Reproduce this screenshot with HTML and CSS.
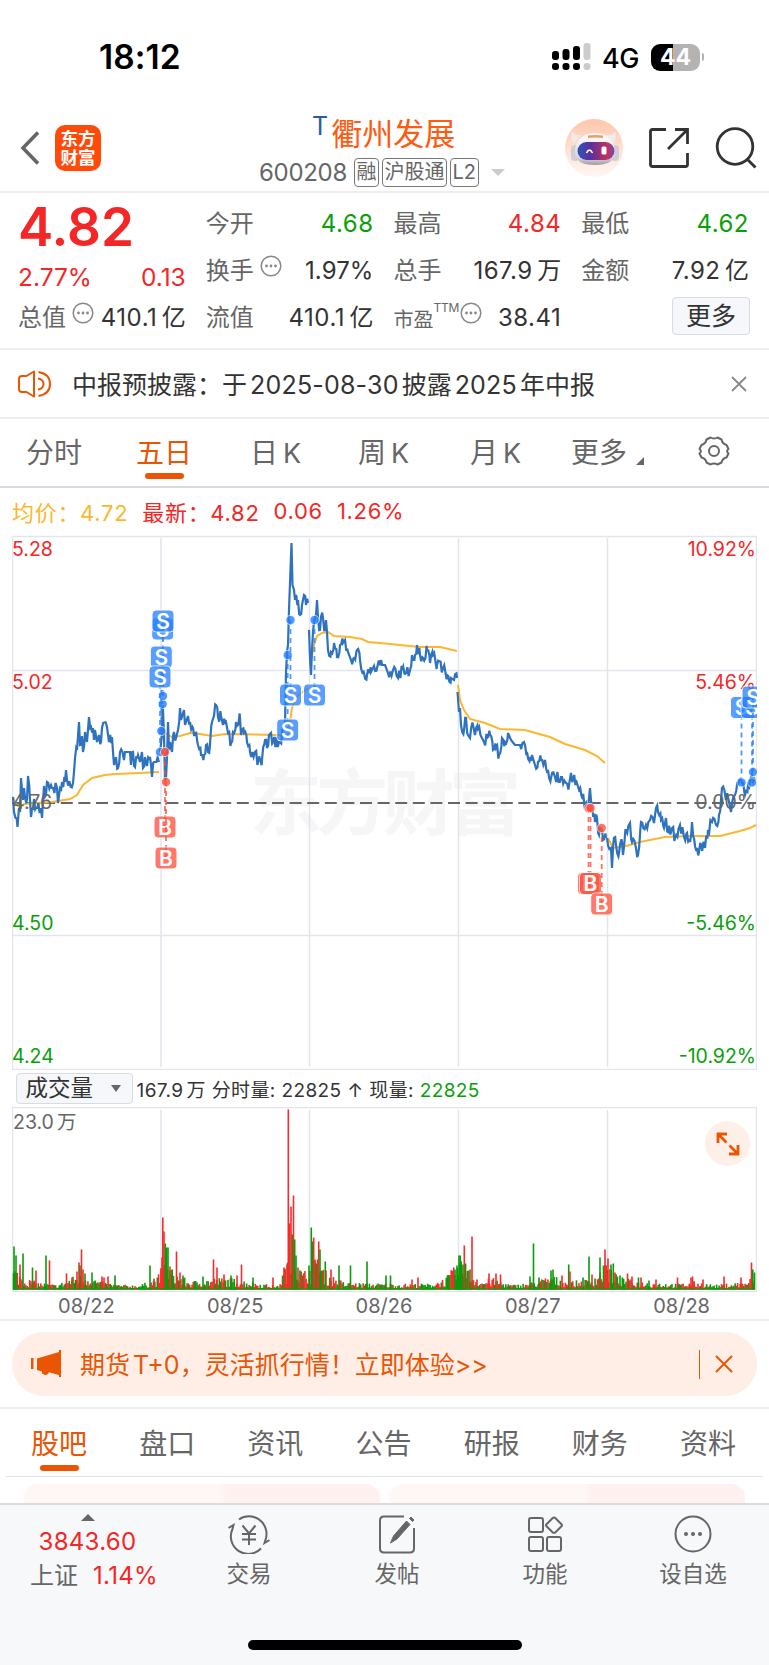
FILE: index.html
```html
<!DOCTYPE html>
<html lang="zh-CN">
<head>
    <meta charset="UTF-8">
    <meta name="viewport" content="width=device-width, initial-scale=1.0">
    <title>衢州发展 600208</title>
    <link rel="stylesheet" href="styles.css">
</head>
<body>
    <div class="status-bar">
        <span class="clock">18:12</span>
        <svg class="signal" width="39" height="28" viewBox="0 0 39 28">
            <g fill="#000">
                <rect x="0" y="8" width="7" height="9" rx="3"/><rect x="0" y="20" width="7" height="7" rx="3"/>
                <rect x="10.5" y="6" width="7" height="11" rx="3"/><rect x="10.5" y="20" width="7" height="7" rx="3"/>
                <rect x="21" y="3" width="7" height="14" rx="3"/><rect x="21" y="20" width="7" height="7" rx="3"/>
            </g>
            <g fill="#ccc"><rect x="31.5" y="0" width="7" height="17" rx="3"/><rect x="31.5" y="20" width="7" height="7" rx="3"/></g>
        </svg>
        <span class="network">4G</span>
        <span class="battery">44</span>
        <span class="battery-tip"></span>
    </div>

    <header class="header">
        <div class="header-left">
            <svg width="21" height="34" viewBox="0 0 21 34"><path d="M18 1.500 3 17l15 15.500" fill="none" stroke="#666" stroke-width="3.600"/></svg>
            <div class="logo">东方<br>财富</div>
        </div>
        <div class="header-title">
            <h1><sup>T</sup>衢州发展</h1>
            <div class="code">
                <span class="code-num">600208</span>
                <span class="tag">融</span><span class="tag">沪股通</span><span class="tag">L2</span>
                <span class="caret"></span>
            </div>
        </div>
        <div class="header-right">
            <svg width="60" height="60" viewBox="0 0 60 60">
                <defs>
                    <linearGradient id="halo" x1="0" y1="0" x2="0" y2="1"><stop offset="0" stop-color="#ffc6aa"/><stop offset="1" stop-color="#fff8f4"/></linearGradient>
                    <linearGradient id="visor"><stop offset="0" stop-color="#2f55b5"/><stop offset=".35" stop-color="#5a2f9e"/><stop offset=".8" stop-color="#c0325c"/><stop offset="1" stop-color="#7a4ab8"/></linearGradient>
                    <linearGradient id="shell" x1="0" y1="0" x2="0" y2="1"><stop offset=".2" stop-color="#f8f6f6"/><stop offset=".8" stop-color="#d5d3d8"/><stop offset="1" stop-color="#9c9aa2"/></linearGradient>
                </defs>
                <circle cx="30" cy="30" r="29" fill="url(#halo)"/>
                <path d="M8.500 13q-3 6 1 12l8-8q-8 1-9-4M50.500 13q3 6-1 12l-8-8q8 1 9-4" fill="#efebec"/>
                <rect x="7" y="27" width="8" height="16" rx="4" fill="#cfced6"/>
                <rect x="47" y="27" width="8" height="16" rx="4" fill="#cfced6"/>
                <path d="M31 15C18 15 11 23 11 34c0 9 7 13 20 13s20-4 20-13c0-11-7-19-20-19" fill="url(#shell)"/>
                <rect x="13.500" y="24" width="37" height="18" rx="9" fill="url(#visor)"/>
                <path d="M24 17.500q7.500-1 15 0v2.500q-7.500-1-15 0z" fill="#e8a062"/>
                <path d="M22.500 35q3-6 6 0" fill="none" stroke="#fff" stroke-width="1.600"/>
                <rect x="37.500" y="28.500" width="5" height="8" rx="1.500" fill="#fff"/>
            </svg>
            <svg width="42" height="42" viewBox="0 0 42 42" fill="none" stroke="#333" stroke-width="2.800">
                <path d="M18 2.500H4.500q-2 0-2 2v33q0 2 2 2h33q2 0 2-2V26M27 2.500h12.500V17M39 3 20 22"/>
            </svg>
            <svg width="42" height="42" viewBox="0 0 42 42" fill="none" stroke="#333" stroke-width="2.800">
                <circle cx="20" cy="19.500" r="17.800"/><path d="m32 32 8.500 8.500"/>
            </svg>
        </div>
    </header>

    <section class="quote">
        <div class="quote-col first">
            <div class="price">4.82</div>
            <div class="cell change"><span>2.77%</span><span>0.13</span></div>
            <div class="cell"><label>总值</label><svg class="dots"><use href="#dots"/></svg><span class="value">410.1<i>亿</i></span></div>
        </div>
        <div class="quote-col">
            <div class="cell"><label>今开</label><span class="value green">4.68</span></div>
            <div class="cell"><label>换手</label><svg class="dots"><use href="#dots"/></svg><span class="value percent">1.97%</span></div>
            <div class="cell"><label>流值</label><span class="value">410.1<i>亿</i></span></div>
        </div>
        <div class="quote-col">
            <div class="cell"><label>最高</label><span class="value red">4.84</span></div>
            <div class="cell"><label>总手</label><span class="value">167.9<i>万</i></span></div>
            <div class="cell"><label class="small">市盈</label><span class="ttm">TTM</span><svg class="dots tight"><use href="#dots"/></svg><span class="value">38.41</span></div>
        </div>
        <div class="quote-col">
            <div class="cell"><label>最低</label><span class="value green">4.62</span></div>
            <div class="cell"><label>金额</label><span class="value">7.92<i>亿</i></span></div>
            <div class="cell"><button class="more">更多</button></div>
        </div>
    </section>

    <div class="notice">
        <svg width="34" height="28" viewBox="0 0 34 28" fill="none" stroke="#ea5504" stroke-width="2" stroke-linejoin="round">
            <path d="M16 1.500v25L8.500 22H4q-3 0-3-3V9q0-3 3-3h4.500zM20 8.500q5.500 1 5.500 5.500T20 19.500M20.500 2q11.500 2 11.500 12t-11.500 12"/>
        </svg>
        <span class="notice-text">中报预披露：于<i>2025-08-30</i>披露<i>2025</i>年中报</span>
        <svg class="close" width="16" height="16" viewBox="0 0 16 16"><path d="m1 1 14 14M15 1 1 15" stroke="#888" stroke-width="1.800"/></svg>
    </div>

    <nav class="period-tabs">
        <span>分时</span>
        <span><b class="active">五日</b></span>
        <span>日<i>K</i></span>
        <span>周<i>K</i></span>
        <span>月<i>K</i></span>
        <span class="tab-more">更多</span>
        <svg width="32" height="32" viewBox="0 0 32 32" fill="none" stroke="#666" stroke-width="2">
            <path d="M12.500 2.500q3.500 2 7 0l4 2q.8 4.200 5 5.500l2 4q-2.800 2-0 4.500l-2 4q-4.200 1-5 5l-4 2q-3.500-2-7 0l-4-2q-.8-4-5-5l-2-4q2.800-2.500 0-4.500l2-4q4.200-1.300 5-5.500z" stroke-linejoin="round"/>
            <circle cx="16" cy="16" r="5"/>
        </svg>
    </nav>

    <div class="legend">
        <span class="avg">均价：4.72</span><span>最新：4.82</span><span>0.06</span><span>1.26%</span>
    </div>

    <svg class="price-chart" viewBox="12 535 745 535">
        <text class="watermark" x="250" y="829" textLength="271">东方财富</text>
        <g class="grid">
            <path d="M12.500 536.500h744v533h-744z" stroke="#d9dde3"/>
            <path d="M13 670.500h743M13 935.500h743M161 538v529M309.500 538v529M458.500 538v529M607.500 538v529"/>
        </g>
        <g class="axis">
            <text class="up" x="12" y="556">5.28</text>
            <text class="up" x="12" y="689">5.02</text>
            <text class="down" x="12" y="930">4.50</text>
            <text class="down" x="12" y="1063">4.24</text>
            <g text-anchor="end">
                <text class="up" x="756" y="556">10.92%</text>
                <text class="up" x="756" y="689">5.46%</text>
                <text class="down" x="756" y="930">-5.46%</text>
                <text class="down" x="756" y="1063">-10.92%</text>
            </g>
        </g>
        <path d="M12 803h744" stroke="#666" stroke-width="2" stroke-dasharray="12 5.600" stroke-dashoffset="4"/>
        <g id="averageLines" class="average-line"></g>
        <g id="priceLines" class="price-line"></g>
        <g class="axis">
            <text class="flat" x="12" y="809">4.76</text>
            <text class="flat" x="756" y="809" text-anchor="end">0.00%</text>
        </g>
        <g id="trades"></g>
    </svg>

    <div class="volume-head">
        <button class="indicator">成交量<span></span></button>
        <span class="volume-text">167.9<i>万</i> 分时量: 22825 ↑ 现量: <em>22825</em></span>
    </div>

    <div class="volume">
        <svg class="volume-chart" viewBox="12 1107 745 186">
            <g class="grid">
                <path d="M12.500 1107.500h744v184h-744z" stroke="#d9dde3"/>
                <path d="M161 1110v180M309.500 1110v180M458.500 1110v180M607.500 1110v180"/>
            </g>
            <g id="volumeBars"></g>
            <g class="axis"><text class="flat" x="13" y="1129">23.0</text><text class="flat" x="57" y="1129">万</text></g>
        </svg>
        <div class="expand">
            <svg width="24" height="24" viewBox="0 0 24 24" fill="none" stroke="#ea5504" stroke-width="2.800"><path d="M11 2H2v9M2 2l8.500 8.500M13 22h9v-9M22 22l-8.500-8.500"/></svg>
        </div>
    </div>
    <div class="dates"><span>08/22</span><span>08/25</span><span>08/26</span><span>08/27</span><span>08/28</span></div>

    <div class="banner-wrap">
        <div class="banner">
            <svg width="31" height="28" viewBox="0 0 31 28" fill="#ea5504"><path d="M0 8h2.500v11H0zM6 8.500 28 2V0h2v27h-2v-2l-10-2.800q-1 3.500-4 2.800l-3-1.500v-2L6 20z"/></svg>
            <span class="banner-text">期货<i>T+0</i>，灵活抓行情！立即体验&gt;&gt;</span>
            <span class="banner-line"></span>
            <svg width="18" height="18" viewBox="0 0 18 18"><path d="m1 1 16 16M17 1 1 17" stroke="#ea5504" stroke-width="2"/></svg>
        </div>
    </div>

    <nav class="section-tabs">
        <span class="active">股吧</span><span>盘口</span><span>资讯</span><span>公告</span><span>研报</span><span>财务</span><span>资料</span>
    </nav>
    <div class="cards"><div class="card"></div><div class="card"></div></div>

    <footer class="bottom-bar">
        <div class="index">
            <span class="triangle"></span>
            <div>3843.60</div>
            <div class="index-change"><label>上证</label>1.14%</div>
        </div>
        <div class="action">
            <svg width="44" height="40" viewBox="0 0 44 40" fill="none" stroke="#666" stroke-width="2">
                <path d="M12 5.500A17.500 17.500 0 0 1 39 24l-1.500 5 5-3M34 34.500A17.500 17.500 0 0 1 5.500 15L6.500 11l-5 3M15.500 11.500l6.500 8 6.500-8M22 19.500V31M15 20h14M15 25.500h14"/>
            </svg>
            <span>交易</span>
        </div>
        <div class="action">
            <svg width="38" height="40" viewBox="0 0 38 40" fill="none" stroke="#666" stroke-width="2">
                <path d="M26 2.500H6q-4 0-4 4v28q0 4 4 4h26q4 0 4-4V14"/>
                <path d="m28.500 7 3.500 3.500-13 14.500-6.500 4 3-7zM31.500 4.500 33 3l3 3-1.500 1.500z" fill="#666" stroke-width="1"/>
            </svg>
            <span>发帖</span>
        </div>
        <div class="action">
            <svg width="36" height="40" viewBox="0 0 36 40" fill="none" stroke="#666" stroke-width="2">
                <rect x="2" y="4" width="14" height="14" rx="2"/><rect x="2" y="23" width="14" height="14" rx="2"/><rect x="20" y="23" width="14" height="14" rx="2"/>
                <path d="m25.500 4.300-6 6q-1 1 0 2l6 6q1.500 1 3 0l6-6q1-1 0-2l-6-6q-1.500-1.500-3 0z"/>
            </svg>
            <span>功能</span>
        </div>
        <div class="action">
            <svg width="40" height="40" viewBox="0 0 40 40"><circle cx="20" cy="20" r="17.500" fill="none" stroke="#666" stroke-width="2"/><g fill="#666"><circle cx="13" cy="20" r="2"/><circle cx="20" cy="20" r="2"/><circle cx="27" cy="20" r="2"/></g></svg>
            <span>设自选</span>
        </div>
    </footer>
    <div class="home-area"><span></span></div>

    <svg width="0" height="0" class="symbols">
        <symbol id="dots" viewBox="0 0 22 22"><circle cx="11" cy="11" r="9.800" fill="none" stroke="#888" stroke-width="1.500"/><g fill="#888"><circle cx="6.500" cy="11" r="1.400"/><circle cx="11" cy="11" r="1.400"/><circle cx="15.500" cy="11" r="1.400"/></g></symbol>
    </svg>
    <script src="script.js"></script>
</body>
</html>
```
FILE: styles.css
```css
* {
    box-sizing: border-box;
}
body {
    margin: 0;
    width: 769px;
    height: 1665px;
    overflow: hidden;
    background: #fff;
    color: #333;
    font-family: Inter, "Noto Sans CJK SC", sans-serif;
    font-size: 24px;
    display: flex;
    flex-direction: column;
}
svg {
    display: block;
    flex: none;
}
i, em {
    font-style: normal;
}
h1 {
    margin: 0;
    font-weight: 400;
}
button {
    font-family: inherit;
    color: #333;
    background: #f6f7fa;
    border: 1.5px solid #d8dbe2;
    border-radius: 4px;
    padding: 0;
}
.symbols {
    position: absolute;
}
.red {
    color: #f42626;
}
.green {
    color: #0aa00a;
}

/* status bar */
.status-bar {
    height: 112px;
    padding: 2px 65px 0 99px;
    display: flex;
    align-items: center;
    color: #000;
}
.clock {
    font-size: 33.5px;
    font-weight: 600;
    letter-spacing: 0.1px;
    margin-right: auto;
}
.network {
    font-size: 27px;
    font-weight: 500;
    letter-spacing: -0.5px;
    margin: 2px 12px 0 11px;
}
.battery {
    width: 49px;
    height: 27px;
    border-radius: 9px;
    background: linear-gradient(90deg, #000 44%, #b3b3b3 44%);
    color: #fff;
    font-size: 23px;
    font-weight: 700;
    line-height: 27px;
    text-align: center;
}
.battery-tip {
    width: 2px;
    height: 8px;
    margin-left: 2px;
    border-radius: 0 3px 3px 0;
    background: #b3b3b3;
}

/* header */
.header {
    height: 81px;
    border-bottom: 2px solid #eee;
    display: flex;
}
.header-left {
    display: flex;
    align-items: center;
    padding: 0 0 7px 20px;
    gap: 14px;
}
.logo {
    width: 46px;
    height: 46px;
    border-radius: 10px;
    background: #ff4a0a;
    color: #fff;
    font-size: 17.5px;
    font-weight: 700;
    line-height: 19px;
    padding-top: 4px;
    text-align: center;
}
.header-title {
    flex: none;
    width: 250px;
    margin-left: 158px;
}
.header-title h1 {
    height: 43px;
    padding-left: 53px;
    color: #ff5a0f;
    font-size: 31px;
    line-height: 44px;
    display: flex;
    white-space: nowrap;
}
.header-title sup {
    color: #2c5aa5;
    font-size: 25px;
    line-height: 28px;
    margin-right: 3px;
}
.code {
    display: flex;
    align-items: center;
    height: 34px;
    color: #666;
    white-space: nowrap;
}
.code-num {
    font-size: 24px;
    letter-spacing: -0.3px;
    margin-right: 7px;
}
.tag {
    height: 29px;
    border: 1.5px solid #777;
    border-radius: 4px;
    padding: 0 1.5px;
    margin-right: 3px;
    font-size: 20px;
    line-height: 26px;
}
.caret {
    margin-left: 9px;
    border: 7px solid transparent;
    border-top-color: #ccc;
    border-bottom: 0;
}
.header-right {
    display: flex;
    align-items: center;
    margin-left: auto;
    padding: 0 12px 7px 0;
    gap: 25px;
}
.header-right svg:first-child {
    margin-right: -1px;
}

/* quote */
.quote {
    height: 157px;
    padding: 7px 20px 0 18px;
    border-bottom: 2px solid #eee;
    display: grid;
    grid-template-columns: repeat(4, 1fr);
    gap: 20px;
}
.cell {
    height: 47px;
    display: flex;
    align-items: center;
    line-height: 30px;
}
.cell label {
    color: #666;
    font-size: 24px;
}
.cell label.small {
    font-size: 20px;
    margin-top: 5px;
}
.value {
    margin-left: auto;
    letter-spacing: 0.5px;
    white-space: nowrap;
}
.value.percent {
    letter-spacing: 0.1px;
}
.value i {
    margin-left: 4.5px;
    letter-spacing: 0;
}
.price {
    height: 56px;
    color: #f42626;
    font-size: 53px;
    font-weight: 600;
    line-height: 54px;
}
.change {
    height: 38px;
    padding-top: 4px;
    color: #f42626;
    font-size: 24.5px;
    justify-content: space-between;
}
.dots {
    width: 22px;
    height: 22px;
    margin: 0 0 10px 6px;
}
.dots.tight {
    margin-left: 1px;
}
.ttm {
    font-size: 12px;
    letter-spacing: -0.3px;
    color: #666;
    margin-bottom: 20px;
}
.more {
    width: 78px;
    height: 38px;
    margin: 0 -1px 4px auto;
    font-size: 25px;
    line-height: 34px;
}

/* notice */
.notice {
    height: 69px;
    padding: 0 22px 0 18px;
    border-bottom: 2px solid #eee;
    display: flex;
    align-items: center;
}
.notice-text {
    margin: 0 0 2px 20px;
    font-size: 25px;
    white-space: nowrap;
}
.notice-text i {
    margin: 0 3px;
    letter-spacing: 0.2px;
}
.close {
    margin-left: auto;
}

/* period tabs */
.period-tabs {
    height: 69px;
    padding: 0 0 3px 26px;
    border-bottom: 2px solid #d8dae2;
    display: grid;
    grid-template-columns: 110px 114px 108px 112px 101px 127px auto;
    align-items: center;
    color: #666;
    font-size: 28px;
}
.period-tabs i {
    font-size: 27px;
    margin-left: 5px;
}
.active {
    color: #ea5504;
    font-weight: 400;
    position: relative;
}
.active::after {
    content: "";
    position: absolute;
    left: 50%;
    bottom: -9px;
    width: 39px;
    height: 6px;
    margin-left: -19.5px;
    border-radius: 3px;
    background: #ea5504;
}
.tab-more {
    position: relative;
}
.tab-more::after {
    content: "";
    position: absolute;
    left: 65px;
    bottom: 6px;
    border-left: 8px solid transparent;
    border-bottom: 8px solid #666;
}

/* price chart */
.legend {
    height: 47px;
    padding: 0 0 1px 12px;
    display: flex;
    align-items: center;
    gap: 14px;
    color: #f42626;
    font-size: 22px;
    letter-spacing: 0.7px;
    white-space: nowrap;
}
.legend .avg {
    color: #fcb72c;
}
.price-chart {
    width: 745px;
    height: 535px;
    margin-left: 12px;
}
.grid path {
    fill: none;
    stroke: #e3e5ee;
    stroke-width: 1.5;
}
.axis text {
    font-size: 19.5px;
}
.axis .up {
    fill: #f42626;
}
.axis .down {
    fill: #0aa00a;
}
.axis .flat {
    fill: #666;
}
.watermark {
    font-size: 72px;
    font-weight: 700;
    fill: #f6f6f6;
}
.price-line polyline {
    fill: none;
    stroke: #2f72be;
    stroke-width: 2.2;
}
.average-line polyline {
    fill: none;
    stroke: #fdb62f;
    stroke-width: 2;
}
.trade text {
    fill: #fff;
    font-size: 21px;
    font-weight: 600;
    text-anchor: middle;
}

/* volume */
.volume-head {
    height: 37px;
    padding: 0 15.5px 1px;
    display: flex;
    align-items: center;
}
.indicator {
    width: 117px;
    height: 31px;
    padding-left: 9px;
    font-size: 22.5px;
    line-height: 26px;
    display: flex;
    align-items: center;
    gap: 18px;
}
.indicator span {
    border: 5px solid transparent;
    border-top: 7px solid #666;
    border-bottom: 0;
}
.volume-text {
    margin-left: 4px;
    font-size: 19px;
    letter-spacing: 0.4px;
    white-space: nowrap;
}
.volume-text i {
    margin-left: 3px;
}
.volume-text em {
    color: #0aa00a;
}
.volume {
    position: relative;
    margin-left: 12px;
}
.volume-chart {
    width: 745px;
    height: 186px;
}
.expand {
    position: absolute;
    right: 19px;
    top: 14px;
    width: 45px;
    height: 45px;
    border-radius: 50%;
    background: #fef0e9;
    display: flex;
    align-items: center;
    justify-content: center;
}
.dates {
    height: 28px;
    padding: 0 13px 0 12px;
    border-bottom: 2px solid #eee;
    display: flex;
    color: #666;
    font-size: 20px;
    line-height: 27px;
    text-align: center;
}
.dates span {
    flex: 1;
}

/* banner */
.banner-wrap {
    height: 88px;
    padding: 11px 12px;
    border-bottom: 2px solid #eee;
}
.banner {
    height: 64px;
    padding: 0 24px 0 19px;
    border-radius: 32px;
    background: #feeee6;
    color: #ea5504;
    display: flex;
    align-items: center;
}
.banner-text {
    margin: 0 auto 2px 18px;
    font-size: 25px;
    white-space: nowrap;
}
.banner-text i {
    margin-left: 3px;
}
.banner-line {
    width: 1.5px;
    height: 29px;
    margin-right: 15px;
    background: #ea5504;
}

/* section tabs */
.section-tabs {
    height: 68px;
    margin: 0 6px;
    padding: 0 27px 1px 25px;
    border-bottom: 1.5px solid #dfe0e8;
    display: flex;
    align-items: center;
    justify-content: space-between;
    color: #666;
    font-size: 28px;
}
.cards {
    height: 26px;
    padding: 7px 24px 0;
    display: flex;
    gap: 9px;
}
.card {
    flex: 1;
    border-radius: 14px 14px 0 0;
    background: linear-gradient(90deg, #fff7f5 55%, #fff1ef 57%);
}

/* bottom bar */
.bottom-bar {
    height: 101px;
    border-top: 2px solid #d9dbe0;
    background: #f6f8fa;
    display: flex;
    color: #666;
    font-size: 22.5px;
}
.index {
    width: 175px;
    padding-top: 9px;
    display: flex;
    flex-direction: column;
    align-items: center;
    color: #f42626;
    font-size: 24px;
    letter-spacing: 0.3px;
    line-height: 34px;
}
.index label {
    color: #666;
    letter-spacing: 0;
    margin-right: 15px;
}
.index-change {
    padding-left: 13px;
}
.triangle {
    border: 7px solid transparent;
    border-bottom: 7px solid #666;
    border-top: 0;
    margin-bottom: 4px;
}
.action {
    width: 148px;
    padding-top: 9px;
    display: flex;
    flex-direction: column;
    align-items: center;
    line-height: 39px;
}
.home-area {
    flex: 1;
    background: #f6f8fa;
    padding-top: 36px;
}
.home-area span {
    display: block;
    width: 274px;
    height: 10px;
    margin: 0 auto;
    border-radius: 5px;
    background: #000;
}
```
FILE: script.js
```js
const NS = 'http://www.w3.org/2000/svg';

// price and average lines, one string of "x,y" points per day
const prices = [
    '13,797 14,812 15.5,818 17.5,827 19,808 20,812 21,778 22,790 23,800 24,788 25,797 27,799 28,776 30,800 31,817 33,810 34,799 36,808 41,808 42,818 43,802 44,786 46,795 47,782 51,785 52,788 57,788 58,803 60,788 62,782 65,782 66,770 67,780 73,783 74,772 75,758 77,750 79,722 80,745 82,736 83,752 85,732 87,742 89,717 91,727 93,728 94,740 95,730 97,742 99,735 101,742 102,728 107,727 109,742 112,737 113,752 114,765 116,757 118,768 120,752 124,760 125,752 130,752 131,765 133,752 135,767 138,755 140,762 142,752 143,768 145,757 147,766 150,757 151,765 152,777 154,762 159,762',
    '160,752 162,735 162.5,705 163,710 164,735 165,780 166,778 167,757 168,722 169,750 170,742 172,752 174,732 176,738 178,730 180,708 181,720 184,710 185,725 188,716 190,722 193,728 195,733 198,745 201,755 204,755 206,745 208,752 210,745 212,722 214,716 216,705 218,717 221,716 223,725 226,722 228,733 231,743 233,732 236,722 240,718 241,735 244,733 247,742 250,752 255,752 258,762 262,760 265,740 267,748 269,735 271,733 273,742 280,742 284,730 285,725 286,672 288,645 289,610 291.5,543 292.5,585 294,590 295,600 298,600 300,615 302,605 304,595 306,605 308,603',
    '309,630 311,675 312,650 313,632 315,620 317,600 318,618 320,630 321,617 323,618 325,630 326,620 327,632 328,650 331,652 334,643 337,657 340,645 343,643 345,640 348,652 351,660 354,658 357,650 360,660 364,673 367,675 371,672 374,666 382,665 385,665 388,673 393,670 398,678 402,670 405,674 410,670 412,655 415,655 417,645 420,655 423,658 427,650 430,663 433,655 437,665 443,668 447,675 451,678 454,680 457,678',
    '457.5,692 459,712 460,708 461,725 464,730 466,718 468,735 470,738 473,725 475,735 478,729 481,736 484,742 487,738 490,735 493,750 496,748 499,755 502,738 505,742 508,733 511,740 515,745 520,745 524,742 527,752 530,757 532,755 535,765 538,762 541,760 545,760 548,770 551,778 555,777 562,777 566,783 569,785 571,773 573,780 576,780 579,790 582,797 586,803 588,808 590,788 592,805 595,822 597,818 599,835 601,830 603,840 606,838',
    '607,838 611,848 612,868 614,838 616,845 619,853 622,842 623,855 626,830 630,823 632,842 636,848 638,855 641,822 646,825 650,820 654,823 656,808 658,812 661,820 664,828 666,818 668,832 672,828 675,838 680,825 684,837 687,833 690,842 692,822 694,838 697,848 699,852 701,845 705,848 708,830 712,822 716,825 719,815 721,800 722,788 726,800 728,797 731,812 735,795 738,785 742,783 745,795 748,785 752,775 755,780'
];
const averages = [
    '13,797 15,803 20,808 24,804 52,802 70,799 77,795 83,785 92,778 105,775 115,774 140,773 159,772',
    '161,740 163,725 165,733 172,737 180,736 190,733 200,734 212,736 225,734 276,735 288,735 290,722 292,708 296,697 304,691 308,688',
    '311,660 314,645 317,636 322,633 328,632 334,636 350,637 362,639 368,642 380,643 400,645 420,647 440,647 457,651',
    '458,685 460,700 464,710 470,719 485,723 500,729 525,730 550,737 565,744 585,750 597,756 605,763',
    '608,838 613,848 626,846 640,842 665,837 690,836 720,836 740,831 750,828 756,825'
];

// [type, x, y of the dot, y of the label]
const trades = [
    ['S', 162.7, 704, 629], ['S', 163, 696, 621], ['S', 161.3, 731, 657], ['S', 160, 752, 677],
    ['B', 165, 752, 827], ['B', 166, 782, 858],
    ['S', 287.7, 655, 730], ['S', 290.5, 620, 695], ['S', 314.5, 620, 695],
    ['B', 588.5, 808, 883.5], ['B', 590.5, 808, 883.5], ['B', 601.7, 828, 904],
    ['S', 741.5, 782.5, 707.5], ['S', 752, 782.5, 707.5], ['S', 753, 772, 697]
];

// [x, height, colour] of the bars that stand out
const spikes = [
    [14, 43, 'g'], [16, 34, 'g'], [20, 25, 'r'], [23, 36, 'g'], [32.5, 22, 'g'], [36, 19, 'r'], [46, 34, 'g'], [49.5, 29, 'r'],
    [66.5, 16, 'r'], [72, 12, 'r'], [77, 18, 'r'], [79, 27, 'r'], [80, 24, 'g'], [81.5, 40, 'r'], [83, 20, 'r'], [85, 16, 'g'], [92, 17, 'g'], [102, 13, 'r'], [104, 12, 'r'], [108, 13, 'r'],
    [115, 14, 'g'], [150, 24, 'g'], [154, 11, 'r'], [161, 20, 'r'], [162, 32, 'r'], [162.8, 72, 'r'], [164, 58, 'r'], [165.3, 46, 'g'], [166.6, 42, 'g'], [168, 42, 'g'], [170, 23, 'r'], [172, 20, 'g'], [176.5, 38, 'r'],
    [180, 17, 'r'], [183, 14, 'g'], [203, 13, 'g'], [213.5, 30, 'r'], [217, 22, 'r'], [224, 15, 'r'], [231, 14, 'g'], [237, 14, 'r'],
    [241.5, 25, 'r'], [253, 12, 'g'], [273, 12, 'r'], [284, 22, 'r'], [285, 20, 'r'], [287, 25, 'r'], [288.3, 180, 'r'], [289.7, 66, 'r'], [291, 83, 'r'], [292.2, 55, 'g'],
    [293.5, 94, 'r'], [294.7, 50, 'g'], [296, 34, 'g'], [298, 22, 'r'], [301, 16, 'r'], [309, 24, 'g'], [311.3, 62, 'g'], [312.5, 48, 'g'], [313.7, 52, 'r'], [315, 30, 'r'], [316.3, 26, 'g'], [317.5, 30, 'r'], [318.7, 48, 'r'], [320, 40, 'g'], [321.5, 19, 'g'],
    [325.3, 28, 'g'], [331, 20, 'r'], [339, 24, 'g'], [350.5, 24, 'g'], [367, 28, 'g'], [386, 14, 'g'], [390.5, 14, 'g'],
    [412, 10, 'r'], [418, 12, 'r'], [449, 14, 'g'], [455, 20, 'g'], [457, 24, 'g'], [459, 34, 'g'], [460.2, 34, 'g'], [461.5, 24, 'g'], [463, 25, 'g'], [464.3, 44, 'r'], [465.6, 26, 'g'], [470, 20, 'g'], [472, 53, 'r'],
    [477, 10, 'r'], [489, 16, 'r'], [496, 16, 'r'], [500.5, 15, 'r'], [530, 13, 'g'], [533.5, 46, 'g'], [539, 12, 'g'],
    [551, 19, 'g'], [553, 20, 'g'], [562, 14, 'r'], [568.7, 25, 'g'], [570, 18, 'r'], [583, 12, 'g'], [589, 33, 'g'], [592, 15, 'r'], [600, 32, 'g'],
    [603.5, 24, 'g'], [605, 40, 'r'], [606.2, 24, 'r'], [608, 31, 'r'], [611, 25, 'g'], [613.3, 26, 'g'], [615, 17, 'r'], [620, 14, 'g'], [627.5, 16, 'r'],
    [632, 13, 'r'], [638.5, 12, 'g'], [641, 12, 'r'], [649, 9, 'g'], [656, 10, 'r'], [677.5, 12, 'r'], [691, 12, 'r'], [692.5, 13, 'r'], [703, 10, 'r'], [724, 13, 'r'],
    [741, 12, 'r'], [751.5, 27, 'r'], [752.8, 20, 'g'], [754.5, 17, 'g']
];
// usual height of the bars along the axis
const levels = [[13, 20], [25, 10], [40, 6], [57, 4], [75, 12], [88, 13], [100, 7], [120, 4], [140, 4], [157, 10], [164, 24], [175, 15], [190, 7], [215, 10], [230, 10], [250, 7], [278, 3], [286, 22], [294, 28], [303, 15], [316, 26], [328, 14], [345, 6], [400, 5], [430, 5], [445, 10], [460, 25], [470, 16], [480, 7], [492, 10], [512, 4], [530, 6], [552, 12], [570, 7], [590, 9], [608, 23], [618, 11], [640, 7], [680, 5], [695, 7], [715, 4], [745, 7], [755, 12]];

let seed = 7;
function random() {
    seed = (seed * 16807) % 2147483647;
    return seed / 2147483647;
}

function add(parent, name, attrs, text) {
    const el = document.createElementNS(NS, name);
    for (const key in attrs) {
        el.setAttribute(key, attrs[key]);
    }
    if (text) el.textContent = text;
    parent.appendChild(el);
    return el;
}

// adds the minute-by-minute ticks between two points
function addTicks(line) {
    const points = line.split(' ').map(p => p.split(',').map(Number));
    const result = [];
    points.forEach(([x, y], i) => {
        result.push(x + ',' + y);
        const next = points[i + 1];
        if (!next) return;
        for (let tx = x + 1.2; tx < next[0] - 0.4; tx += 1.2) {
            const ty = y + (next[1] - y) * (tx - x) / (next[0] - x);
            const tick = Math.round((random() - 0.5) * 3) * 5;
            result.push(tx.toFixed(1) + ',' + (ty + tick).toFixed(1));
        }
    });
    return result.join(' ');
}

const priceLines = document.getElementById('priceLines');
prices.forEach(line => add(priceLines, 'polyline', { points: addTicks(line) }));

const averageLines = document.getElementById('averageLines');
averages.forEach(line => add(averageLines, 'polyline', { points: line }));

const tradeLayer = document.getElementById('trades');
trades.forEach(([type, x, dotY, labelY]) => {
    const color = type === 'S' ? '#2680ff' : '#ff4f3c';
    const g = add(tradeLayer, 'g', { class: 'trade' });
    add(g, 'line', { x1: x, x2: x, y1: dotY, y2: labelY, stroke: color, 'stroke-width': 1.8, 'stroke-dasharray': '5 4', opacity: 0.8 });
    add(g, 'circle', { cx: x, cy: dotY, r: 4.6, fill: color, stroke: '#fff', 'stroke-width': 0.8, opacity: 0.8 });
    add(g, 'rect', { x: x - 11, y: labelY - 11, width: 22, height: 22, rx: 4, fill: color, stroke: '#fff', 'stroke-width': 1, opacity: 0.76 });
    add(g, 'text', { x: x, y: labelY + 7.5 }, type);
});

function levelAt(x) {
    let i = 0;
    while (i < levels.length - 2 && levels[i + 1][0] < x) i++;
    const [x1, h1] = levels[i];
    const [x2, h2] = levels[i + 1];
    return h1 + (h2 - h1) * (x - x1) / (x2 - x1);
}

const volumeBars = document.getElementById('volumeBars');
function addBar(x, height, color) {
    add(volumeBars, 'rect', { x: x - 0.8, y: 1289.5 - height, width: 1.6, height: height, fill: color === 'r' ? '#fa2a2a' : '#0a9a0a' });
}
for (let x = 13.5; x < 755; x += 1.24) {
    addBar(x, Math.max(1.5, levelAt(x) * (0.25 + random() * 0.95)), random() < 0.5 ? 'r' : 'g');
}
spikes.forEach(([x, height, color]) => addBar(x, height, color));
add(volumeBars, 'rect', { x: 13, y: 1288.5, width: 742, height: 1.2, fill: '#0a9a0a' });
```
